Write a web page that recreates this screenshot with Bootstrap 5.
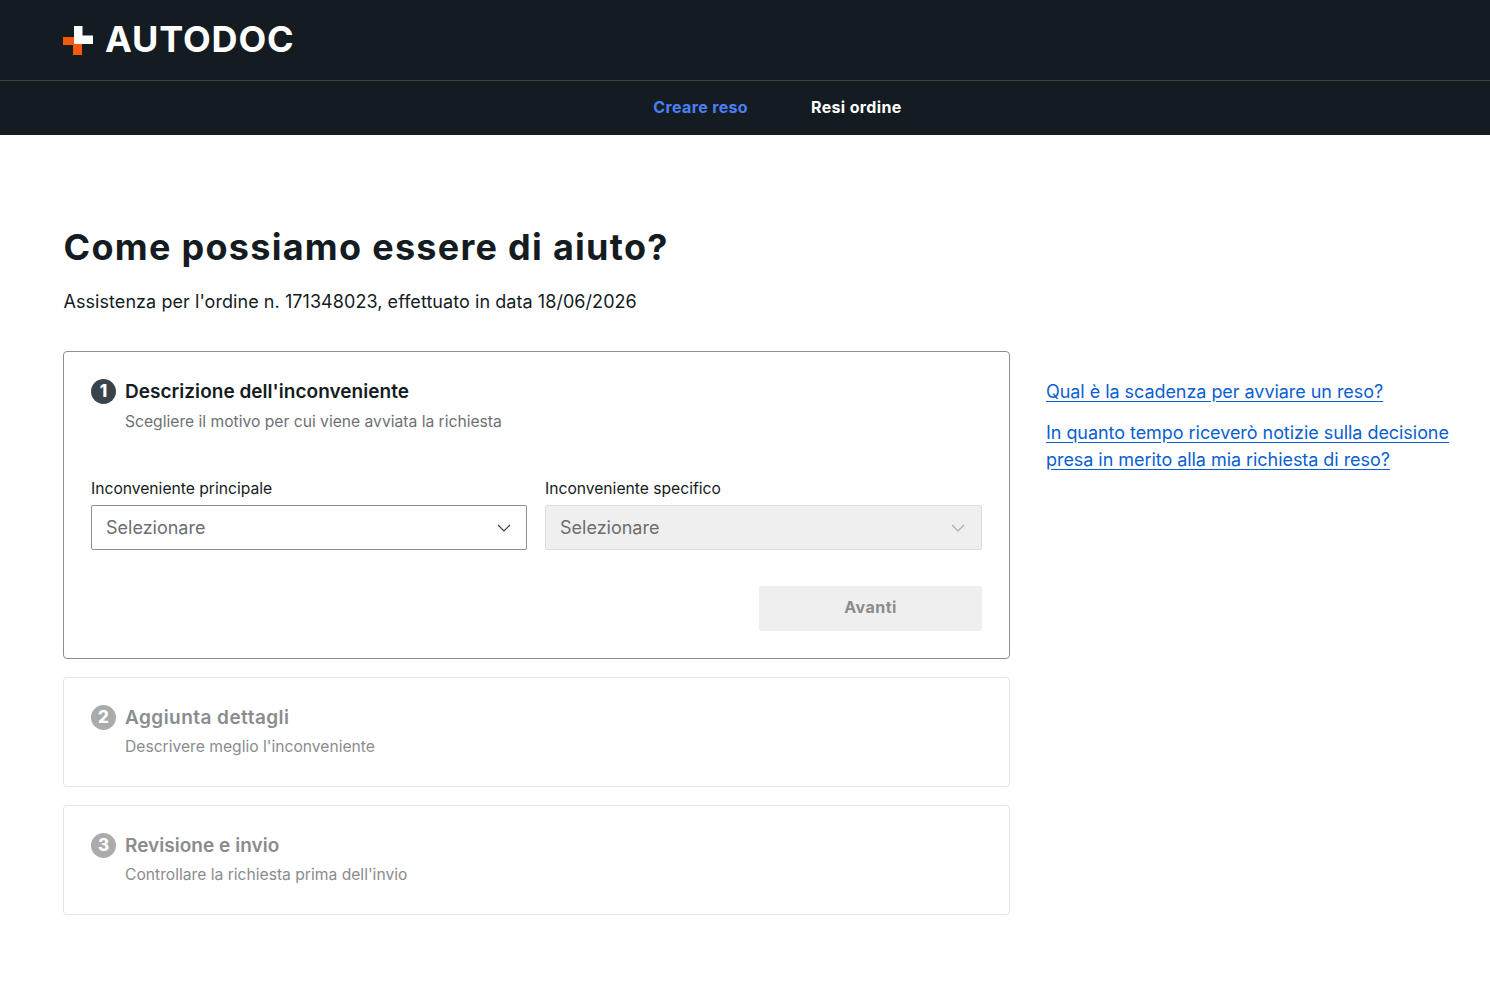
<!DOCTYPE html>
<html lang="it">

<head>
    <meta charset="UTF-8">
    <meta name="viewport" content="width=device-width, initial-scale=1.0">
    <link href="https://cdn.jsdelivr.net/npm/bootstrap@5.3.1/dist/css/bootstrap.min.css" rel="stylesheet">
    <title>Come possiamo essere di aiuto?</title>

    <style>
        body {
            font-family: Inter, "Liberation Sans", sans-serif;
            font-size: 18px;
            color: #141c22;
            background: #fff;
        }

        .top-head {
            background: #141c22;
            height: 135px;
        }

        .logo-row {
            height: 81px;
            padding-left: 63px;
            border-bottom: 1px solid #3d4347;
        }

        .logo-text {
            font-family: Inter, sans-serif;
            font-weight: 700;
            font-size: 36px;
            line-height: 1;
            letter-spacing: .85px;
            color: #fff;
            margin-left: 12px;
            padding-bottom: 2px;
        }

        .head-nav {
            height: 54px;
            padding: 0 0 2px 65px;
            gap: 63px;
        }

        .head-nav a {
            font-size: 16px;
            font-weight: 700;
            letter-spacing: .35px;
            color: #fff;
            text-decoration: none;
        }

        .head-nav a.on {
            color: #4b80f5;
        }

        .page-wrap {
            padding: 0 34px 0 63px;
        }

        .page-title {
            font-family: Inter, sans-serif;
            font-weight: 700;
            font-size: 36px;
            line-height: 44px;
            letter-spacing: 1.28px;
            margin: 90px 0 0 .5px;
        }

        .page-sub {
            line-height: 28px;
            letter-spacing: .06px;
            margin: 19px 0 35px .5px;
        }

        .step-col {
            width: 947px;
        }

        .side-col {
            width: 410px;
            padding-top: 27px;
        }

        .side-col a {
            display: block;
            color: #0a5fd0;
            line-height: 27px;
            letter-spacing: -.05px;
            text-underline-offset: 3px;
            margin-bottom: 14px;
        }

        .step-box {
            border: 1px solid #e3e4e5;
            border-radius: 4px;
            padding: 27px;
            height: 110px;
            margin-bottom: 18px;
            color: #8a8c8e;
        }

        .step-box.open {
            border-color: #8c8f91;
            height: 308px;
            color: #141c22;
        }

        .step-num {
            width: 25px;
            height: 25px;
            border-radius: 50%;
            background: #a9abac;
            color: #fff;
            font-size: 17px;
            font-weight: 800;
            line-height: 25px;
            text-align: center;
            flex-shrink: 0;
            margin-right: 9px;
        }

        .open .step-num {
            background: #3a4349;
        }

        .step-title {
            font-size: 19px;
            font-weight: 600;
            line-height: 25px;
            letter-spacing: .03px;
        }

        .step-title.wide-title {
            letter-spacing: .45px;
        }

        .step-note {
            font-size: 15.65px;
            line-height: 24px;
            color: #8a8c8e;
            margin: 5px 0 0 34px;
        }

        .open .step-note {
            color: #6e7174;
            margin-top: 6px;
        }

        .field-row {
            margin-top: 44px;
            gap: 18px;
        }

        .field-item {
            flex: 1 1 0;
        }

        .field-item.first-field {
            flex: 0 0 436px;
        }

        .field-lbl {
            font-size: 15.65px;
            line-height: 22px;
            margin-bottom: 5px;
            display: block;
        }

        .pick-box {
            height: 45px;
            border: 1px solid #8c8f91;
            border-radius: 2px;
            padding: 0 15px 0 14px;
            color: #6b6e71;
            background: #fff;
        }

        .pick-box.off {
            background: #efefef;
            border-color: #dcdddd;
            padding-right: 16px;
        }

        .next-btn {
            width: 223px;
            height: 45px;
            margin-top: 36px;
            padding: 0 0 3px;
            background: #efefef;
            color: #8a8c8e;
            border: 0;
            border-radius: 2px;
            font-size: 16px;
            font-weight: 700;
            letter-spacing: .5px;
        }
    </style>
</head>

<body>
    <header class="top-head">
        <div class="logo-row d-flex align-items-center">
            <svg width="30" height="29" viewBox="0 0 30 29">
                <path fill="#f4590c" d="M0 11h19v18H10V19H0z"/>
                <path fill="#fff" d="M11 0h8.500v9.500H30V18H11z"/>
            </svg>
            <span class="logo-text">AUTODOC</span>
        </div>
        <nav class="head-nav d-flex align-items-center justify-content-center">
            <a class="on" href="#">Creare reso</a>
            <a href="#">Resi ordine</a>
        </nav>
    </header>

    <main class="page-wrap">
        <h1 class="page-title">Come possiamo essere di aiuto?</h1>
        <p class="page-sub">Assistenza per l'ordine n. 171348023, effettuato in data 18/06/2026</p>

        <div class="d-flex justify-content-between">
            <div class="step-col">
                <section class="step-box open">
                    <div class="d-flex align-items-center">
                        <span class="step-num">1</span>
                        <span class="step-title">Descrizione dell'inconveniente</span>
                    </div>
                    <p class="step-note">Scegliere il motivo per cui viene avviata la richiesta</p>

                    <div class="field-row d-flex">
                        <div class="field-item first-field">
                            <span class="field-lbl">Inconveniente principale</span>
                            <div class="pick-box d-flex align-items-center justify-content-between">
                                Selezionare
                                <svg width="14" height="8" viewBox="0 0 14 8" fill="none" stroke="#3a4349" stroke-width="1.200">
                                    <path d="M1 1l6 6 6-6"/>
                                </svg>
                            </div>
                        </div>
                        <div class="field-item">
                            <span class="field-lbl">Inconveniente specifico</span>
                            <div class="pick-box off d-flex align-items-center justify-content-between">
                                Selezionare
                                <svg width="14" height="8" viewBox="0 0 14 8" fill="none" stroke="#a9abac" stroke-width="1.200">
                                    <path d="M1 1l6 6 6-6"/>
                                </svg>
                            </div>
                        </div>
                    </div>

                    <div class="d-flex justify-content-end">
                        <button class="next-btn" type="button" disabled>Avanti</button>
                    </div>
                </section>

                <section class="step-box">
                    <div class="d-flex align-items-center">
                        <span class="step-num">2</span>
                        <span class="step-title wide-title">Aggiunta dettagli</span>
                    </div>
                    <p class="step-note">Descrivere meglio l'inconveniente</p>
                </section>

                <section class="step-box">
                    <div class="d-flex align-items-center">
                        <span class="step-num">3</span>
                        <span class="step-title">Revisione e invio</span>
                    </div>
                    <p class="step-note">Controllare la richiesta prima dell'invio</p>
                </section>
            </div>

            <aside class="side-col">
                <a href="#">Qual è la scadenza per avviare un reso?</a>
                <a href="#">In quanto tempo riceverò notizie sulla decisione presa in merito alla mia richiesta di reso?</a>
            </aside>
        </div>
    </main>

    <script src="https://cdn.jsdelivr.net/npm/bootstrap@5.3.1/dist/js/bootstrap.bundle.min.js"></script>
</body>

</html>
